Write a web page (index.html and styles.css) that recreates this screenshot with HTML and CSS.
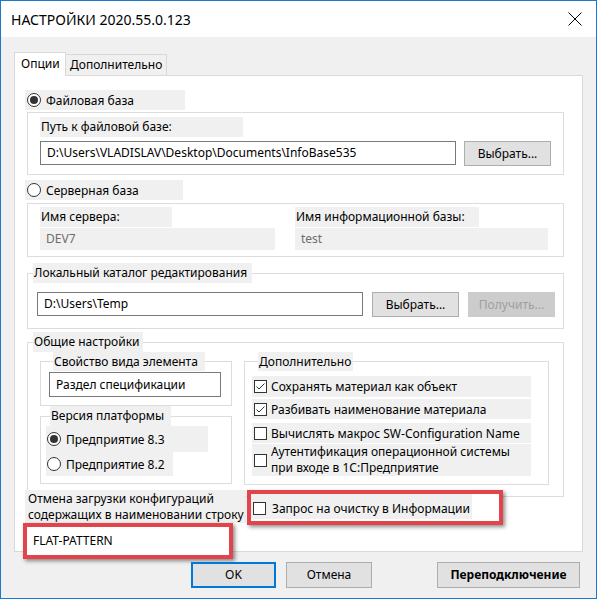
FILE: index.html
```html
<!DOCTYPE html>
<html lang="ru">
<head>
    <meta charset="UTF-8">
    <meta name="viewport" content="width=device-width, initial-scale=1.0">
    <title>Настройки</title>
    <link rel="stylesheet" href="styles.css">
</head>
<body>
<div class="window">
    <div class="titlebar">
        <div class="title">НАСТРОЙКИ 2020.55.0.123</div>
        <svg class="close" width="14" height="14" viewBox="0 0 14 14">
            <path d="M0.5 0.5 L13.5 13.5 M13.5 0.5 L0.5 13.5" stroke="#000" stroke-width="1" fill="none"/>
        </svg>
    </div>

    <div class="tabs">
        <div class="tab active">Опции</div>
        <div class="tab">Дополнительно</div>
    </div>

    <div class="panel">
        <div class="radio-row w-file"><span class="radio checked"></span>Файловая база</div>
        <div class="box box-file">
            <div class="caption w-path">Путь к файловой базе:</div>
            <div class="line">
                <div class="field w-path-input">D:\Users\VLADISLAV\Desktop\Documents\InfoBase535</div>
                <div class="btn">Выбрать...</div>
            </div>
        </div>

        <div class="radio-row w-server"><span class="radio"></span>Серверная база</div>
        <div class="box box-server">
            <div class="col col-server">
                <div class="caption w-srv">Имя сервера:</div>
                <div class="field disabled w-srv-input">DEV7</div>
            </div>
            <div class="col">
                <div class="caption w-ib">Имя информационной базы:</div>
                <div class="field disabled w-ib-input">test</div>
            </div>
        </div>

        <fieldset class="group group-local">
            <legend class="w-local">Локальный каталог редактирования</legend>
            <div class="line local-body">
                <div class="field w-temp">D:\Users\Temp</div>
                <div class="btn">Выбрать...</div>
                <div class="btn disabled">Получить...</div>
            </div>
        </fieldset>

        <fieldset class="group group-common">
            <legend class="w-common">Общие настройки</legend>
            <div class="common-body">
                <div class="left-col">
                    <fieldset class="sub sub-view">
                        <legend class="small w-view">Свойство вида элемента</legend>
                        <div class="field w-view-input">Раздел спецификации</div>
                    </fieldset>
                    <fieldset class="sub sub-version">
                        <legend class="w-version">Версия платформы</legend>
                        <div class="radio-row ver ver-1"><span class="radio checked"></span>Предприятие 8.3</div>
                        <div class="radio-row ver ver-2"><span class="radio"></span>Предприятие 8.2</div>
                    </fieldset>
                </div>
                <fieldset class="sub sub-extra">
                    <legend class="small w-extra">Дополнительно</legend>
                    <div class="check-row row-1">
                        <span class="check"><svg width="11" height="11" viewBox="0 0 11 11"><path d="M1.5 5.5 L4 8 L9.5 2.5" stroke="#333" stroke-width="1" fill="none"/></svg></span>
                        Сохранять материал как объект
                    </div>
                    <div class="check-row row-2">
                        <span class="check"><svg width="11" height="11" viewBox="0 0 11 11"><path d="M1.5 5.5 L4 8 L9.5 2.5" stroke="#333" stroke-width="1" fill="none"/></svg></span>
                        Разбивать наименование материала
                    </div>
                    <div class="check-row row-3">
                        <span class="check"></span>
                        Вычислять макрос SW-Configuration Name
                    </div>
                    <div class="check-row row-4">
                        <span class="check"></span>
                        <span class="two-lines">Аутентификация операционной системы<br>при входе в 1С:Предприятие</span>
                    </div>
                </fieldset>
            </div>
        </fieldset>

        <div class="bottom-row">
            <div class="bottom-left">
                <div class="cancel-label">Отмена загрузки конфигураций<br>содержащих в наименовании строку</div>
                <div class="mark mark-input">
                    <div class="field plain">FLAT-PATTERN</div>
                </div>
            </div>
            <div class="mark mark-check">
                <div class="check-row row-clear">
                    <span class="check"></span>
                    Запрос на очистку в Информации
                </div>
            </div>
        </div>
    </div>

    <div class="buttons">
        <div class="btn default w-ok">OK</div>
        <div class="btn w-cancel">Отмена</div>
        <div class="btn bold w-reconnect">Переподключение</div>
    </div>
</div>
</body>
</html>
```

FILE: styles.css
```css
* {
    box-sizing: border-box;
}
body {
    margin: 0;
    font-family: "Noto Sans", "Open Sans", sans-serif;
    font-size: 12px;
    color: #000;
}
.window {
    width: 597px;
    height: 599px;
    border: 1px solid #1a79cc;
    background: #f0f0f0;
    overflow: hidden;
}
.titlebar {
    height: 36px;
    background: #fff;
    display: flex;
    align-items: center;
    justify-content: space-between;
    padding-left: 10px;
}
.title {
    font-size: 14px;
}
.close {
    margin-right: 14px;
}

/* tabs */
.tabs {
    display: flex;
    align-items: flex-end;
    height: 23px;
    margin-top: 15px;
    padding-left: 13px;
}
.tab {
    height: 21px;
    width: 101px;
    line-height: 20px;
    padding-left: 4px;
    background: #f0f0f0;
    border: 1px solid #d9d9d9;
    border-left: 0;
    border-bottom: 0;
}
.tab.active {
    position: relative;
    z-index: 1;
    height: 24px;
    width: 52px;
    margin-bottom: -1px;
    line-height: 22px;
    padding-left: 6px;
    background: #fff;
    border-left: 1px solid #d9d9d9;
}
.panel {
    margin-left: 13px;
    width: 569px;
    height: 477px;
    background: #fff;
    border: 1px solid #d9d9d9;
    padding: 14px 0 0 10px;
}

/* common controls */
.radio-row {
    display: flex;
    align-items: center;
    height: 20px;
    background: #f0f0f0;
}
.radio {
    flex: none;
    width: 14px;
    height: 14px;
    margin: 0 5px 0 2px;
    border: 1px solid #333;
    border-radius: 50%;
    background: #fff;
    display: flex;
    align-items: center;
    justify-content: center;
}
.radio.checked::after {
    content: "";
    width: 8px;
    height: 8px;
    border-radius: 50%;
    background: #333;
}
.check {
    flex: none;
    width: 13px;
    height: 13px;
    border: 1px solid #333;
    background: #fff;
    display: flex;
    align-items: center;
    justify-content: center;
}
.caption {
    height: 20px;
    line-height: 20px;
    padding-left: 1px;
    background: #f0f0f0;
}
.field {
    height: 24px;
    line-height: 22px;
    padding-left: 6px;
    background: #fff;
    border: 1px solid #7a7a7a;
    white-space: nowrap;
    overflow: hidden;
}
.field.disabled {
    height: 22px;
    line-height: 22px;
    border: 0;
    background: #f0f0f0;
    color: #6d6d6d;
}
.btn {
    flex: none;
    width: 87px;
    height: 25px;
    line-height: 23px;
    text-align: center;
    background: #e1e1e1;
    border: 1px solid #adadad;
}
.btn.disabled {
    background: #cccccc;
    border-color: #cccccc;
    color: #a0a0a0;
}
.line {
    display: flex;
    align-items: flex-start;
    gap: 8px;
}

/* file and server boxes */
.w-file { width: 160px; }
.w-server { width: 158px; margin-top: 5px; }
.box {
    margin-left: 2px;
    width: 537px;
    border: 1px solid #dcdcdc;
}
.box-file {
    margin-top: 2px;
    height: 63px;
    padding: 4px 0 0 12px;
}
.box-file .line { margin-top: 4px; }
.w-path { width: 203px; }
.w-path-input { width: 416px; }
.box-server {
    margin-top: 3px;
    height: 54px;
    padding: 3px 0 0 12px;
    display: flex;
}
.col-server { width: 255px; }
.col .field { margin-top: 1px; }
.w-srv { width: 132px; }
.w-srv-input { width: 235px; }
.w-ib { width: 184px; }
.w-ib-input { width: 253px; }

/* group boxes */
fieldset {
    margin: 0;
    padding: 0;
    min-width: 0;
    border: 1px solid #dcdcdc;
}
legend {
    padding: 0 0 0 1px;
    height: 20px;
    line-height: 20px;
    background: #f0f0f0;
    white-space: nowrap;
}
legend.small {
    height: 19px;
    line-height: 19px;
}
.group {
    margin-left: 2px;
    width: 537px;
}
.group legend { margin-left: 5px; }
.group-local { margin-top: 6px; }
.w-local { width: 219px; }
.local-body {
    padding: 9px 0 11px 9px;
    gap: 9px;
}
.w-temp { width: 326px; }

.group-common { margin-top: 3px; }
.w-common { width: 110px; }
.common-body {
    display: flex;
    align-items: flex-start;
    padding: 0 0 11px 12px;
}
.left-col {
    width: 192px;
    margin-right: 12px;
}
.sub legend { margin-left: 4px; }
.sub-view {
    padding: 1px 0 8px 8px;
}
.w-view { width: 152px; }
.w-view-input { width: 172px; height: 25px; line-height: 23px; }
.sub-version {
    padding: 0 0 7px 5px;
}
.w-version { width: 121px; }
.ver { padding-left: 0; }
.ver .radio { margin-left: 1px; }
.ver-1 { width: 162px; height: 26px; }
.ver-2 { width: 127px; height: 24px; }

.sub-extra {
    width: 305px;
    padding: 5px 0 8px 7px;
}
.sub-extra legend { margin-left: 6px; }
.w-extra { width: 95px; }
.check-row {
    display: flex;
    align-items: center;
    gap: 4px;
    width: 279px;
    height: 20px;
    padding-left: 2px;
    background: #f0f0f0;
    white-space: nowrap;
}
.row-1 { height: 21px; }
.row-2 { margin-top: 2px; }
.row-3 { margin-top: 4px; }
.row-4 { margin-top: 1px; height: 32px; }
.two-lines { line-height: 16px; }

/* bottom part of the panel */
.bottom-row {
    display: flex;
    align-items: flex-start;
    margin-top: -7px;
}
.bottom-left { width: 221px; }
.cancel-label {
    height: 33px;
    padding: 1px 0 0 3px;
    line-height: 16px;
    background: #f0f0f0;
    white-space: nowrap;
}
.mark {
    border: 4px solid #e2444b;
    box-shadow: 2px 2px 4px rgba(0, 0, 0, 0.45);
    background: #fff;
}
.mark-input {
    margin-left: -2px;
    width: 210px;
    height: 36px;
}
.field.plain {
    border: 0;
    height: 28px;
    line-height: 28px;
}
.mark-check {
    margin-left: 1px;
    width: 256px;
    height: 35px;
}
.row-clear {
    width: 221px;
    height: 25px;
    gap: 6px;
    padding-top: 4px;
}

/* dialog buttons */
.buttons {
    display: flex;
    margin-top: 10px;
    padding-left: 190px;
}
.buttons .btn { height: 26px; line-height: 24px; }
.btn.default {
    border: 2px solid #0078d7;
    line-height: 22px;
}
.w-ok { width: 85px; }
.w-cancel { width: 86px; margin-left: 10px; }
.w-reconnect { width: 143px; margin-left: 65px; }
.btn.bold { font-weight: bold; }
```
